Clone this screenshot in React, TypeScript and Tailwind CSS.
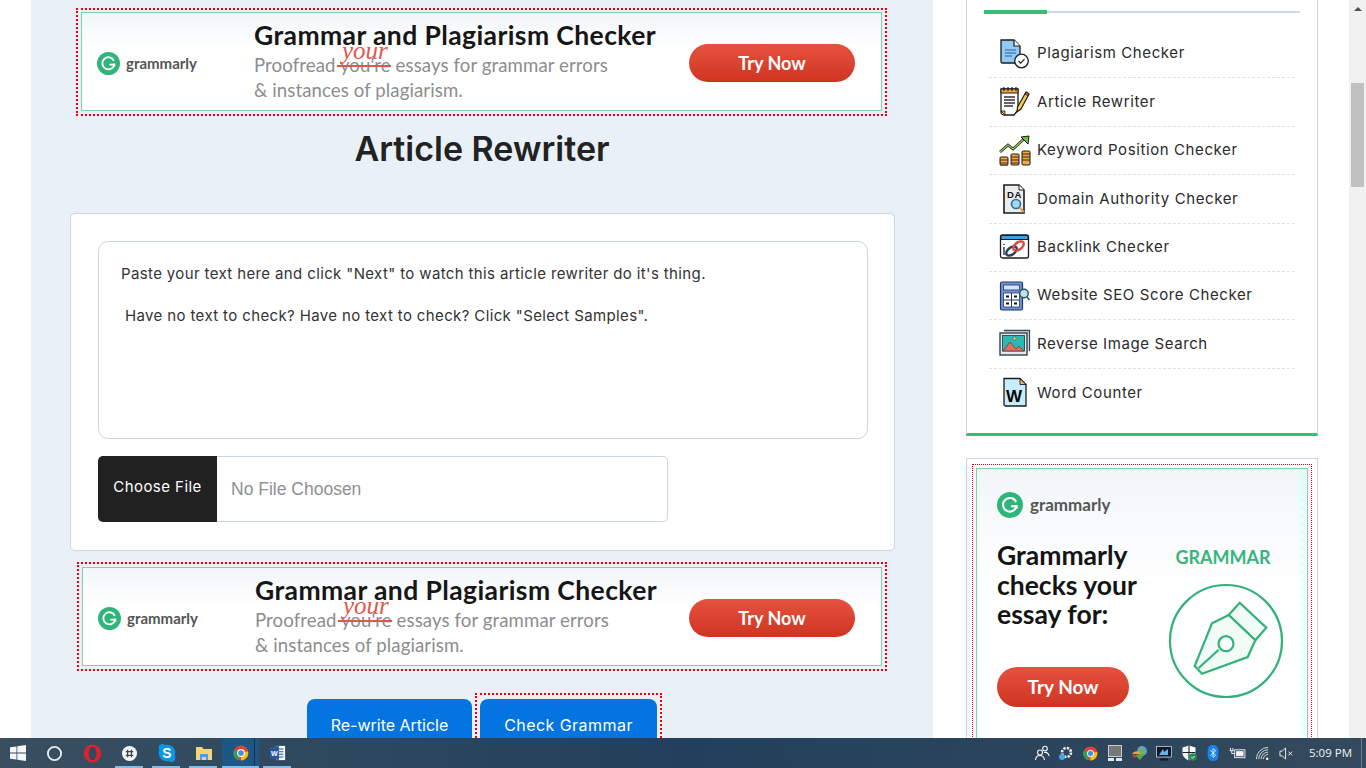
import React from "react";

const UI = "font-['Inter','Liberation_Sans',sans-serif]";
const AD = "font-['Lato','Liberation_Sans',sans-serif]";

function GMark({ size }: { size: number }) {
  return (
    <svg width={size} height={size} viewBox="0 0 24 24" className="shrink-0">
      <circle cx="12" cy="12" r="12" fill="#2fb57a" />
      <path d="M17.6 9.2A6.3 6.3 0 1 0 18 13.2h-5" fill="none" stroke="#fff" strokeWidth="1.9" />
      <path d="M18.6 15.2l-.6 -2.4 -2.6 .4" fill="none" stroke="#fff" strokeWidth="1.5" />
    </svg>
  );
}

function TryNow({ className }: { className: string }) {
  return (
    <div className={`flex items-center justify-center rounded-full bg-gradient-to-b from-[#e5523f] to-[#cf3320] pt-[2px] font-bold text-white ${AD} ${className}`}>
      Try Now
    </div>
  );
}

function Banner({ className }: { className: string }) {
  return (
    <div className={`shrink-0 border-2 border-dotted border-[#f00000] px-[3px] pb-[3px] ${className}`}>
      <div className={`flex h-[99px] items-center border border-[#7fd1a6] bg-gradient-to-b from-[#f2f6f9] via-white via-40% to-white ${AD}`}>
        <div className="flex w-[172px] shrink-0 items-center gap-[6px] pl-[15px] pt-[3px]">
          <GMark size={23} />
          <span className="text-[15px] font-bold text-[#555]">grammarly</span>
        </div>
        <div className="relative flex flex-col pb-px">
          <div className="text-[26.5px] leading-[32px] font-bold tracking-[0.4px] whitespace-nowrap text-[#161616]">Grammar and Plagiarism Checker</div>
          <div className="mt-[2px] text-[18.6px] leading-[25px] tracking-[0.1px] whitespace-nowrap text-[#8d8d8d]">Proofread you're essays for grammar errors</div>
          <div className="text-[18.6px] leading-[25px] tracking-[0.1px] whitespace-nowrap text-[#8d8d8d]">&amp; instances of plagiarism.</div>
          <span className="absolute top-[19px] left-[88px] font-['Liberation_Serif',serif] text-[25px] leading-[26px] text-[#e2574c] italic">your</span>
          <span className="absolute top-[46px] left-[83px] h-[2px] w-[54px] bg-[#e2574c]" />
        </div>
        <TryNow className="mt-[2px] mr-[26px] ml-auto h-[38px] w-[166px] shrink-0 text-[18px]" />
      </div>
    </div>
  );
}

const stroke = "#1c1c1c";
const toolIcons: React.ReactNode[] = [
  <svg key="p" viewBox="0 0 32 32" className="size-[32px]">
    <path d="M2 2h13l6 6v17H3.500a1.500 1.500 0 0 1-1.500-1.500z" fill="#90c9f5" stroke={stroke} strokeWidth="1.300" />
    <path d="M15 2v6h6" fill="#fff" stroke={stroke} strokeWidth="1.200" />
    <path d="M6 12h11M6 15h11M6 18h7" stroke="#35648c" strokeWidth="1.200" />
    <circle cx="22.500" cy="23" r="6.800" fill="#fff" stroke={stroke} strokeWidth="1.300" />
    <path d="M19.500 23l2.200 2.200 3.800-4" fill="none" stroke={stroke} strokeWidth="1.200" />
  </svg>,
  <svg key="a" viewBox="0 0 32 32" className="size-[32px]">
    <path d="M2 3h17v21l-4 5H5a3 3 0 0 1-3-3z" fill="#fff" stroke={stroke} strokeWidth="1.300" />
    <path d="M2 3h17v4H2z" fill="#f5a742" stroke={stroke} strokeWidth="1" />
    <path d="M5 1v4M9 1v4M13 1v4M17 1v4" stroke={stroke} strokeWidth="1.200" />
    <path d="M5 11h11M5 14h11M5 17h11M5 20h9" stroke="#333" strokeWidth="1.300" />
    <path d="M2 25l4 4v-4z" fill="#f5a742" stroke={stroke} strokeWidth=".8" />
    <path d="M27 6l3 2-8 15-4 3 .5-5z" fill="#f7c948" stroke={stroke} strokeWidth="1.200" />
    <path d="M27 6l3 2-1 2-3-2z" fill="#e2574c" stroke={stroke} strokeWidth=".8" />
  </svg>,
  <svg key="k" viewBox="0 0 32 32" className="size-[32px]">
    <path d="M1 18l8-7 5 4 11-10" fill="none" stroke={stroke} strokeWidth="2.600" />
    <path d="M1 18l8-7 5 4 11-10" fill="none" stroke="#8fcf4a" strokeWidth="1.300" />
    <path d="M22 3l8-1-1 8z" fill="#6fbf3a" stroke={stroke} strokeWidth="1" />
    {[[1, 23, 8, 8], [12, 20, 8, 11], [23, 17, 8, 14]].map(([x, y, w, h]) => (
      <g key={x}>
        <rect x={x} y={y} width={w} height={h} rx="1" fill="#f5a742" stroke={stroke} strokeWidth="1" />
        <path d={`M${x} ${y + 3}h${w}M${x} ${y + 6}h${w}M${x} ${y + 9}h${w}`} stroke={stroke} strokeWidth=".9" opacity={h > 9 ? 1 : 0.9} />
      </g>
    ))}
  </svg>,
  <svg key="d" viewBox="0 0 32 32" className="size-[32px]">
    <path d="M5 2h15l5 5v23H5z" fill="#ececec" stroke={stroke} strokeWidth="1.600" />
    <path d="M20 2v5h5" fill="#fff" stroke={stroke} strokeWidth="1" />
    <text x="8" y="14.500" fontSize="9.500" fontWeight="700" fontFamily="Liberation Sans" fill="#111">DA</text>
    <circle cx="17" cy="21" r="4.500" fill="#a5d8ef" stroke="#30709c" strokeWidth="1.700" />
    <path d="M20.500 24.500l4.500 4.500" stroke="#e09a4a" strokeWidth="2" />
  </svg>,
  <svg key="b" viewBox="0 0 32 32" className="size-[32px]">
    <rect x="1.500" y="4" width="28" height="23" rx="2" fill="#fff" stroke={stroke} strokeWidth="1.300" />
    <path d="M2 4.500h27v4H2z" fill="#3aa2e6" stroke={stroke} strokeWidth="1" />
    <path d="M5 16v8" stroke={stroke} strokeWidth="1.300" />
    <circle cx="5" cy="13.500" r=".8" fill={stroke} />
    <ellipse cx="12.500" cy="20" rx="6" ry="3.500" transform="rotate(-38 12.500 20)" fill="none" stroke="#29425f" strokeWidth="2.400" />
    <ellipse cx="19.500" cy="15" rx="6" ry="3.500" transform="rotate(-38 19.500 15)" fill="none" stroke="#d84a3e" strokeWidth="2.400" />
  </svg>,
  <svg key="s" viewBox="0 0 32 32" className="size-[32px]">
    <rect x="1.500" y="2" width="22" height="28" rx="1.500" fill="#6e93de" stroke="#24375e" strokeWidth="1.200" />
    <rect x="4.500" y="5" width="16" height="5" fill="#d5e3f8" stroke="#24375e" strokeWidth=".8" />
    <path d="M4.500 13h16v14h-16z" fill="#fff" stroke="#24375e" strokeWidth=".8" />
    <path d="M12.500 13v14M4.500 20h16" stroke="#24375e" strokeWidth="1" />
    <path d="M7 16.500h3M15 16.500h3M7 23.500h3M15 23.500h3" stroke="#111" strokeWidth="1.800" />
    <circle cx="25" cy="13.500" r="4.300" fill="#bfe3ea" stroke="#2d5160" strokeWidth="1.400" />
    <path d="M28 17l2.500 3" stroke="#2d5160" strokeWidth="1.500" />
  </svg>,
  <svg key="r" viewBox="0 0 32 32" className="size-[32px]">
    <path d="M5 2.500h25.500V23" fill="#dfe3e6" stroke="#3b4a55" strokeWidth="1.300" />
    <rect x="1" y="5" width="27" height="22" fill="#e5e9ec" stroke="#33424d" strokeWidth="1.400" />
    <rect x="3.500" y="7.500" width="22" height="15.500" fill="#2fb7b3" stroke="#33424d" strokeWidth=".9" />
    <path d="M4 23l7-9 6 7 3-3 5 5z" fill="#ec6a58" stroke="#33424d" strokeWidth=".7" />
    <circle cx="15.500" cy="10.500" r="1.500" fill="#ffe08a" stroke="#33424d" strokeWidth=".6" />
  </svg>,
  <svg key="w" viewBox="0 0 32 32" className="size-[32px]">
    <path d="M5 1.500h16l6 6V29H6.500A1.500 1.500 0 0 1 5 27.500z" fill="#c6edfb" stroke={stroke} strokeWidth="1.300" />
    <path d="M21 1.500v6h6z" fill="#f0b45a" stroke={stroke} strokeWidth=".9" />
    <text x="7" y="25" fontSize="17" fontWeight="700" fontFamily="Liberation Sans" fill="#050505">W</text>
  </svg>,
];
const tools = ["Plagiarism Checker", "Article Rewriter", "Keyword Position Checker", "Domain Authority Checker", "Backlink Checker", "Website SEO Score Checker", "Reverse Image Search", "Word Counter"];

function Bar({ icon, active, open }: { icon: React.ReactNode; active?: boolean; open?: boolean }) {
  return (
    <div className={`relative flex h-[30px] w-[37px] shrink-0 items-center justify-center ${active ? "bg-[#1d5786]" : ""}`}>
      {icon}
      {active && <span className="absolute top-0 right-[4px] h-[30px] w-px bg-[#14324e]" />}
      {open && <span className={`absolute bottom-0 h-[2px] bg-[#84bce8] ${active ? "left-0 w-[37px]" : "left-[4px] w-[28px]"}`} />}
    </div>
  );
}

const chrome = (cls: string) => (
  <svg viewBox="0 0 18 18" className={cls}><circle cx="9" cy="9" r="8.500" fill="#db4437" /><path d="M9 9l7.800-2A8.500 8.500 0 0 1 9 17.500z" fill="#f4c20d" /><path d="M9 9L5 17A8.500 8.500 0 0 1 1.500 5z" fill="#2e9e4f" /><circle cx="9" cy="9" r="3.800" fill="#4a89dc" stroke="#fff" strokeWidth="1.200" /></svg>
);

const taskIcons = [
  { open: true, icon: <svg viewBox="0 0 18 18" className="size-[17px]"><circle cx="9" cy="9" r="8" fill="#f3f4f5" /><path d="M7 5v8M11 5v8M5 7h8M5 11h8" stroke="#34495c" strokeWidth="1.400" /></svg> },
  { open: true, icon: <svg viewBox="0 0 18 18" className="size-[20px]"><circle cx="9" cy="9" r="7.500" fill="#0a96e6" /><circle cx="5" cy="4.500" r="3.500" fill="#0a96e6" /><circle cx="13" cy="13.500" r="3.500" fill="#0a96e6" /><text x="9" y="13.500" textAnchor="middle" fontSize="12.500" fontWeight="700" fontFamily="Liberation Sans" fill="#fff">S</text></svg> },
  { open: true, icon: <svg viewBox="0 0 18 18" className="size-[18px]"><path d="M1 3h6l1.500 2H17v11H1z" fill="#f6d57a" /><path d="M5 10h8v6h-2v-3H7v3H5z" fill="#3ba3e8" /></svg> },
  { open: true, active: true, icon: chrome("size-[16px]") },
  { open: true, icon: <svg viewBox="0 0 18 18" className="size-[16px]"><path d="M7 1h10v16H7z" fill="#f3f6fb" /><path d="M9 4.500h6M9 7.500h6M9 10.500h6M9 13.500h6" stroke="#2b579a" strokeWidth="1.200" /><path d="M0 2.500l10-1.500v16L0 15.500z" fill="#2b579a" /><text x="5" y="12" textAnchor="middle" fontSize="8" fontWeight="700" fontFamily="Liberation Sans" fill="#fff">W</text></svg> },
];

const trayIcons: React.ReactNode[] = [
  <svg key="1" viewBox="0 0 16 16" className="size-[16px]" fill="none" stroke="#f2f4f6" strokeWidth="1.100"><circle cx="6" cy="7.500" r="2.500" /><circle cx="11" cy="3.500" r="2.300" /><path d="M1.500 15c.2-3 2-4.500 4.500-4.500s4 1.500 4.500 4.500M10 7.500c2.600-.5 4.500 1 5 3.500" /></svg>,
  <svg key="2" viewBox="0 0 16 16" className="size-[16px]"><circle cx="8.500" cy="7.500" r="4.500" fill="none" stroke="#f2f4f6" strokeWidth="2.500" strokeDasharray="2.300 1.200" /><circle cx="4" cy="12" r="3" fill="#46a4ea" /></svg>,
  <span key="3">{chrome("size-[15px]")}</span>,
  <svg key="4" viewBox="0 0 16 16" className="size-[16px]"><rect x="1.500" y=".5" width="13" height="11" fill="#777" stroke="#c9cdd1" /><rect x="1" y="13" width="6" height="3" fill="#e7e7e7" /><rect x="9" y="13" width="6" height="3" fill="#e7e7e7" /></svg>,
  <svg key="5" viewBox="0 0 16 16" className="size-[16px]"><circle cx="10" cy="6" r="5" fill="#5f9fd6" /><path d="M7 3l4 0 2 4-3 3z" fill="#79b24b" /><path d="M0 9c3-4 7-3 9 0z" fill="#e8a33b" /><path d="M3 10l10-1-5 6z" fill="#5fa638" /><path d="M0 9l5 2-3 2z" fill="#d9403a" /></svg>,
  <svg key="6" viewBox="0 0 16 16" className="size-[16px]"><rect x=".5" y="1.500" width="15" height="10.500" fill="#0e1a2b" stroke="#dfe3e7" strokeWidth=".7" /><path d="M3 10l4-6 1 3 4-3v6z" fill="#6ab0e8" /><path d="M4 14.500h8" stroke="#0e1a2b" strokeWidth="2" /></svg>,
  <svg key="7" viewBox="0 0 16 16" className="size-[16px]"><path d="M8 .5l6.500 2V8c0 3.500-3 6-6.500 7.500C4.500 14 1.500 11.500 1.500 8V2.500z" fill="#f6f7f8" /><path d="M8 .5v15M1.500 7.500h13" stroke="#1a1f24" strokeWidth="1.100" /><circle cx="12" cy="12" r="3.800" fill="#1f8f52" /><path d="M10.300 12l1.300 1.300 2.100-2.300" stroke="#fff" fill="none" strokeWidth=".9" /></svg>,
  <svg key="8" viewBox="0 0 12 18" className="h-[16px] w-[12px]"><rect width="12" height="18" rx="5.500" fill="#1684ec" /><path d="M3 6l6 5.500-3 2.500V4l3 2.500L3 12" fill="none" stroke="#fff" strokeWidth=".9" /></svg>,
  <svg key="9" viewBox="0 0 18 14" className="h-[13px] w-[17px]" fill="none" stroke="#f2f4f6"><path d="M1.500 1v3M4 1v3M.5 4h4.500M2.800 4v3h3" /><rect x="6" y="3" width="11" height="8.500" /><rect x="8" y="5" width="7" height="4.500" fill="#f2f4f6" /></svg>,
  <svg key="10" viewBox="0 0 16 16" className="size-[15px]" fill="none" stroke="#dfe3e7" strokeWidth="1"><path d="M1.500 14A12.500 12.500 0 0 1 14 1.500M4 14A10 10 0 0 1 14 4M6.500 14A7.500 7.500 0 0 1 14 6.500M9 14a5 5 0 0 1 5-5" /><circle cx="13" cy="13.500" r="1.300" fill="#fff" stroke="none" /></svg>,
  <svg key="11" viewBox="0 0 16 16" className="size-[15px]" fill="none" stroke="#f2f4f6" strokeWidth="1"><path d="M1 5.500h2.500L7 2v12l-3.500-3.500H1zM10 6l4 4M14 6l-4 4" /></svg>,
];

export default function App() {
  return (
    <div className={`flex h-screen flex-col overflow-hidden bg-white ${UI}`}>
      <div className="flex min-h-0 flex-1 overflow-hidden">
        <main className="ml-[31px] flex w-[902px] shrink-0 flex-col items-center bg-[#e9f0f8] pt-[8px]">
          <Banner className="-ml-px w-[811px] pt-[2px]" />
          <h1 className="mt-[7px] h-[50px] shrink-0 pt-px text-[34px] leading-[50px] font-semibold text-[#222]">Article Rewriter</h1>
          <section className="mt-[40px] ml-px h-[338px] w-[825px] shrink-0 rounded-[5px] border border-[#c9d6e6] bg-white pl-[27px] pt-[27px]">
            <div className="h-[198px] w-[770px] rounded-[10px] border border-[#c9d6e6] px-[22px] pt-[22px] text-[15px] leading-[20px] tracking-[0.37px] text-[#333]">
              <p>Paste your text here and click "Next" to watch this article rewriter do it's thing.</p>
              <p className="mt-[22px] pl-[4px]">Have no text to check? Have no text to check? Click "Select Samples".</p>
            </div>
            <div className="mt-[17px] flex h-[66px] w-[570px]">
              <div className="flex w-[119px] items-center justify-center rounded-l-[5px] bg-[#212121] pb-[4px] text-[15px] tracking-[0.45px] text-white">Choose File</div>
              <div className="flex flex-1 items-center rounded-r-[5px] border border-l-0 border-[#c9d6e6] pl-[14px] font-['Liberation_Sans',sans-serif] text-[17.5px] text-[#8d9094]">No File Choosen</div>
            </div>
          </section>
          <Banner className="mt-[11px] w-[810px] pt-[3px]" />
          <div className="mt-[22px] ml-[5px] flex shrink-0 items-start">
            <button className="mt-[6px] flex h-[56px] w-[165px] justify-center rounded-lg bg-[#0474e0] pt-[16px] text-[16px] leading-[20px] text-white">Re-write Article</button>
            <div className="ml-[3px] border-2 border-dotted border-[#f00000] px-[3px] pt-[4px]">
              <button className="flex h-[56px] w-[177px] justify-center rounded-lg bg-[#0474e0] pt-[16px] text-[16px] leading-[20px] tracking-[0.45px] text-white">Check Grammar</button>
            </div>
          </div>
        </main>

        <aside className="ml-[33px] flex w-[352px] shrink-0 flex-col gap-[22px]">
          <div className="shrink-0 border-x border-b-[3px] border-x-[#c9d6e6] border-b-[#37c073] bg-white pt-[10px] pb-[16px]">
            <div className="mx-[17px] flex items-center">
              <div className="h-[4px] w-[63px] bg-[#37c073]" />
              <div className="h-[2px] flex-1 bg-[#cdd8e6]" />
            </div>
            <ul className="mx-[22px] mt-[16px]">
              {tools.map((t, i) => (
                <li key={t} className={`flex h-[48.400px] items-center pl-[10px] text-[15px] tracking-[0.6px] text-[#2a2a2a] ${i < 7 ? "border-b border-dashed border-[#e2e2e2]" : ""}`}>
                  <span className="flex w-[38px] shrink-0 items-center">{toolIcons[i]}</span>
                  <span>{t}</span>
                </li>
              ))}
            </ul>
          </div>
          <div className="shrink-0 border border-[#c9d6e6] bg-white px-[5px] pt-[5px]">
            <div className="border border-dotted border-[#f00000] px-[3px] pt-[3px]">
              <div className={`h-[300px] border border-[#7fd1a6] bg-gradient-to-b from-[#f2f6f9] via-white via-40% to-white px-[20px] pt-[23px] ${AD}`}>
                <div className="flex items-center gap-[7px]">
                  <GMark size={26} />
                  <span className="text-[17px] font-bold text-[#555]">grammarly</span>
                </div>
                <div className="mt-[23px] flex">
                  <div className="w-[165px] shrink-0">
                    <div className="text-[26.500px] leading-[29.500px] font-bold whitespace-nowrap text-[#141414]">Grammarly<br />checks your<br />essay for:</div>
                    <TryNow className="mt-[37px] h-[40px] w-[132px] text-[19px]" />
                  </div>
                  <div className="flex flex-col items-center pt-[4px]">
                    <div className="text-[18px] leading-[24px] font-bold text-[#37b57e]">GRAMMAR</div>
                    <svg viewBox="0 0 116 116" className="mt-[14px] ml-[6px] size-[116px] shrink-0" fill="none" stroke="#32b179" strokeWidth="2.200">
                      <circle cx="58" cy="58" r="56" />
                      <path d="M71.700 19.700L98.300 44.700 87.300 57.300 60.700 32z" fill="#f2fcf7" />
                      <path d="M60.700 32L44 40.300 26.700 83l7.300 7.700 45.700-16.700 7.600-16.700z" fill="#f2fcf7" />
                      <circle cx="58" cy="60.700" r="7.500" fill="#fff" />
                      <path d="M30.700 85l20-18.300" />
                    </svg>
                  </div>
                </div>
              </div>
            </div>
          </div>
        </aside>

        <div className="ml-auto flex w-[17px] shrink-0 flex-col items-center bg-[#f1f1f1]">
          <div className="mt-[7px] size-0 border-x-[4px] border-b-[4px] border-x-transparent border-b-[#505050]" />
          <div className="mt-[72px] h-[104px] w-[13px] shrink-0 bg-[#c1c1c1]" />
        </div>
      </div>

      <footer className="flex h-[30px] shrink-0 items-center bg-gradient-to-r from-[#394f60] via-[#22405c] to-[#34495c] text-[#f2f4f6]">
        <div className="flex w-[36px] shrink-0 justify-center">
          <svg viewBox="0 0 16 16" className="size-[16px]" fill="#f4f6f8"><path d="M0 2.300l6.500-.9v6.200H0zM7.300 1.300L16 0v7.600H7.300zM0 8.400h6.500v6.200L0 13.700zM7.300 8.400H16V16l-8.700-1.300z" /></svg>
        </div>
        <div className="flex w-[37px] shrink-0 justify-center">
          <svg viewBox="0 0 18 18" className="size-[17px]"><circle cx="9" cy="9" r="7" fill="none" stroke="#e8edf2" strokeWidth="2" /></svg>
        </div>
        <div className="ml-px flex w-[37px] shrink-0 justify-center">
          <svg viewBox="0 0 18 18" className="size-[19px]"><ellipse cx="9" cy="9" rx="8.300" ry="8.500" fill="#e0202c" /><ellipse cx="9" cy="9" rx="3.800" ry="6.500" fill="#34495c" /></svg>
        </div>
        {taskIcons.map((t, i) => <Bar key={i} {...t} />)}
        <div className="ml-auto flex items-center">
          {trayIcons.map((ic, i) => (
            <span key={i} className="flex w-[24.500px] shrink-0 items-center justify-center">{ic}</span>
          ))}
        </div>
        <span className="ml-[10px] font-['Open_Sans',sans-serif] text-[11.500px] whitespace-nowrap">5:09 PM</span>
        <div className="mr-[4px] ml-[9px] h-[30px] border-l border-[#6f7f8e]" />
      </footer>
    </div>
  );
}
